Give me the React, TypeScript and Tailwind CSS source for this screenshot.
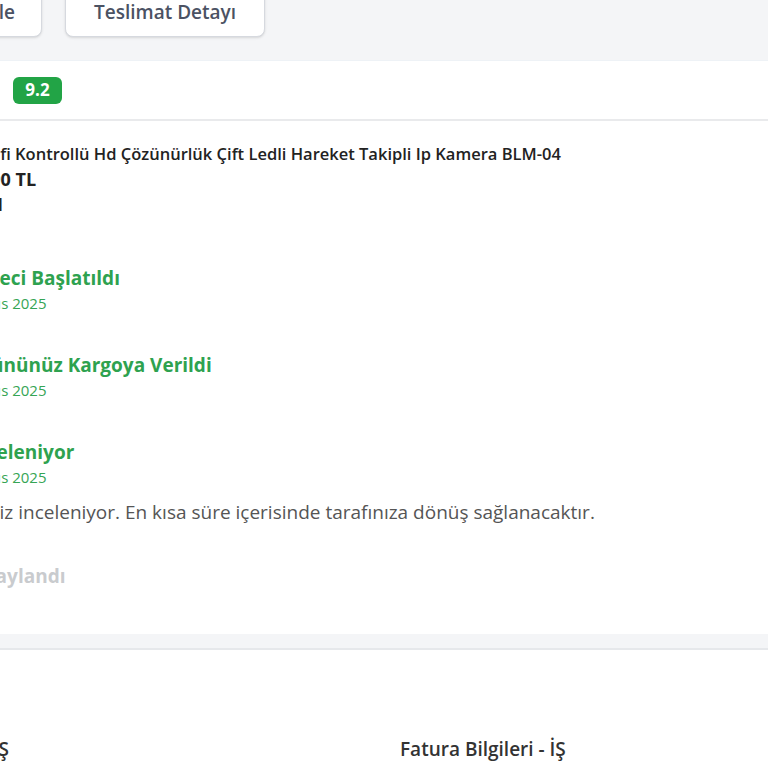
const steps = [
  { title: "Süreci Başlatıldı", date: "Mayıs 2025", done: true },
  { title: "Ürününüz Kargoya Verildi", date: "Mayıs 2025", done: true },
  {
    title: "İnceleniyor",
    date: "Mayıs 2025",
    done: true,
    note: "Talebiniz inceleniyor. En kısa süre içerisinde tarafınıza dönüş sağlanacaktır.",
  },
  { title: "Onaylandı", done: false },
];

export default function App() {
  return (
    <div
      className="h-[768px] w-[768px] overflow-hidden bg-[#f4f5f7]"
      style={{ fontFamily: '"Open Sans", "Noto Sans", sans-serif' }}
    >
      {/* top actions */}
      <div className="flex h-[60px] items-start gap-[23px]">
        <button className="-ml-[158px] -mt-[13px] flex h-[50px] w-[200px] shrink-0 items-center justify-end whitespace-nowrap rounded-lg border border-[#d6d9df] bg-white pr-[26px] text-[19px] font-semibold text-[#4b5263] shadow-sm">
          Faturayı Görüntüle
        </button>
        <button className="-mt-[13px] flex h-[50px] w-[200px] shrink-0 items-center justify-center whitespace-nowrap rounded-lg border border-[#d6d9df] bg-white text-[19px] font-semibold text-[#4b5263] shadow-sm">
          Teslimat Detayı
        </button>
      </div>

      {/* order card */}
      <section className="border-t border-[#eef2f6] bg-white">
        <div className="flex h-[60px] items-center border-b-2 border-[#e9eaec] pl-[13px]">
          <span className="flex h-[27px] w-[49px] items-center justify-center rounded-[6px] bg-[#22a446] text-[17px] font-bold text-white">
            9.2
          </span>
        </div>

        <div className="pb-[45px] pt-[20px]">
          <div className="-ml-[20px] text-[#222]">
            <p className="text-[16.5px] font-semibold leading-[26px]">
              Wifi Kontrollü Hd Çözünürlük Çift Ledli Hareket Takipli Ip Kamera BLM-04
            </p>
            <p className="text-[18px] font-bold leading-[25px]">890 TL</p>
          </div>
          <p className="-ml-[6px] text-[18px] font-bold leading-[25px] text-[#222]">1</p>

          <ol className="-ml-[32px] mt-[49px] flex flex-col">
            {steps.map((s) => (
              <li key={s.title} className={s.note ? "mb-[39px]" : "mb-[37px] last:mb-0"}>
                <p
                  className={
                    s.done
                      ? "text-[19px] font-bold leading-[25px] text-[#2ea24f]"
                      : "text-[19px] font-bold leading-[25px] text-[#c9cbce]"
                  }
                >
                  {s.title}
                </p>
                {s.date && (
                  <p className="text-[15px] leading-[25px] text-[#35a555]">{s.date}</p>
                )}
                {s.note && (
                  <p className="-ml-[33px] mt-[10px] text-[19px] leading-[25px] text-[#555]">
                    {s.note}
                  </p>
                )}
              </li>
            ))}
          </ol>
        </div>
      </section>

      <div className="h-[16px] border-b-2 border-[#e6e8eb]" />

      {/* billing card */}
      <section className="h-[200px] bg-white pt-[85px]">
        <div className="flex">
          <h3 className="-ml-[175px] w-[575px] shrink-0 text-[19px] font-semibold text-[#333]">
            Teslimat Bilgileri - İŞ
          </h3>
          <h3 className="text-[19px] font-semibold text-[#333]">Fatura Bilgileri - İŞ</h3>
        </div>
      </section>
    </div>
  );
}
